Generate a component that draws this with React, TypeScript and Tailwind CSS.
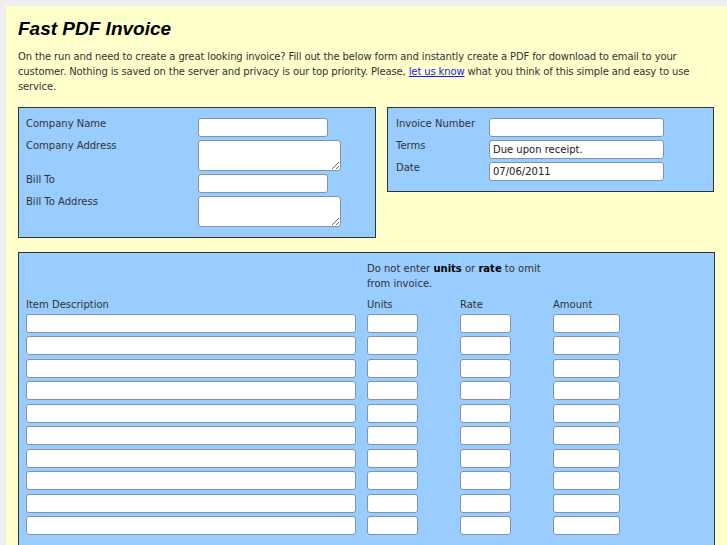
const font = { fontFamily: '"DejaVu Sans", Verdana, sans-serif' };

const inputCls =
  'block h-[19px] rounded-[3px] border border-[#8494a8] bg-white px-[3px] text-[10px] text-[#222] outline-none';
const areaCls =
  'block h-[31px] resize-y rounded-[3px] border border-[#8494a8] bg-white px-[3px] text-[10px] outline-none';

const Field = ({ label, children }: { label: string; children: React.ReactNode }) => (
  <div className="flex items-start">
    <div className="w-[172px] leading-[15px]">{label}</div>
    <div className="mt-[2px]">{children}</div>
  </div>
);

const MetaField = ({ label, value }: { label: string; value?: string }) => (
  <div className="flex items-start">
    <div className="w-[93px] leading-[15px]">{label}</div>
    <div className="mt-[2px]">
      <input className={`${inputCls} w-[175px]`} defaultValue={value} style={font} />
    </div>
  </div>
);

const App = () => {
  const rows = Array.from({ length: 10 });
  return (
    <div className="min-h-screen overflow-hidden bg-[#eeeeee] pl-[6px] pt-[6px]">
      <div
        className="min-h-[540px] bg-[#ffffcc] px-[12px] pt-[11px] text-[10px] text-[#333]"
        style={font}
      >
        <h1
          className="text-[19px] font-bold italic leading-[24px] text-black"
          style={{ fontFamily: '"Liberation Sans", Arial, sans-serif' }}
        >
          Fast PDF Invoice
        </h1>
        <p className="mt-[8px] leading-[15px] tracking-[-0.13px]">
          On the run and need to create a great looking invoice? Fill out the below form and
          instantly create a PDF for download to email to your customer. Nothing is saved on the
          server and privacy is our top priority. Please,{' '}
          <a href="#" className="text-[#1a1aee] underline">
            let us know
          </a>{' '}
          what you think of this simple and easy to use service.
        </p>

        {/* company / invoice details */}
        <div className="mt-[13px] flex items-start gap-[11px]">
          <div className="flex h-[131px] w-[358px] flex-col gap-[1px] border border-[#333] bg-[#99ccff] px-[7px] pt-[8px]">
            <Field label="Company Name">
              <input className={`${inputCls} w-[130px]`} style={font} />
            </Field>
            <Field label="Company Address">
              <textarea className={`${areaCls} w-[143px]`} style={font} />
            </Field>
            <Field label="Bill To">
              <input className={`${inputCls} w-[130px]`} style={font} />
            </Field>
            <Field label="Bill To Address">
              <textarea className={`${areaCls} w-[143px]`} style={font} />
            </Field>
          </div>

          <div className="flex h-[85px] w-[327px] flex-col gap-[1px] border border-[#333] bg-[#99ccff] px-[8px] pt-[8px]">
            <MetaField label="Invoice Number" />
            <MetaField label="Terms" value="Due upon receipt." />
            <MetaField label="Date" value="07/06/2011" />
          </div>
        </div>

        {/* line items */}
        <div className="mt-[14px] border border-[#333] bg-[#99ccff] px-[7px] pb-[10px] pt-[8px]">
          <div className="flex">
            <div className="w-[341px]" />
            <div className="w-[186px] leading-[15px]">
              Do not enter <b className="text-black">units</b> or{' '}
              <b className="text-black">rate</b> to omit from invoice.
            </div>
          </div>
          <div className="mt-[6px] flex leading-[15px]">
            <div className="w-[341px]">Item Description</div>
            <div className="w-[93px]">Units</div>
            <div className="w-[93px]">Rate</div>
            <div>Amount</div>
          </div>
          <div className="mt-[2px] flex flex-col gap-[3.45px]">
            {rows.map((_, i) => (
              <div key={i} className="flex">
                <div className="w-[341px]">
                  <input className={`${inputCls} w-[330px]`} style={font} />
                </div>
                <div className="w-[93px]">
                  <input className={`${inputCls} w-[51px]`} style={font} />
                </div>
                <div className="w-[93px]">
                  <input className={`${inputCls} w-[51px]`} style={font} />
                </div>
                <input className={`${inputCls} w-[67px]`} style={font} />
              </div>
            ))}
          </div>
        </div>
      </div>
    </div>
  );
};

export default App;
